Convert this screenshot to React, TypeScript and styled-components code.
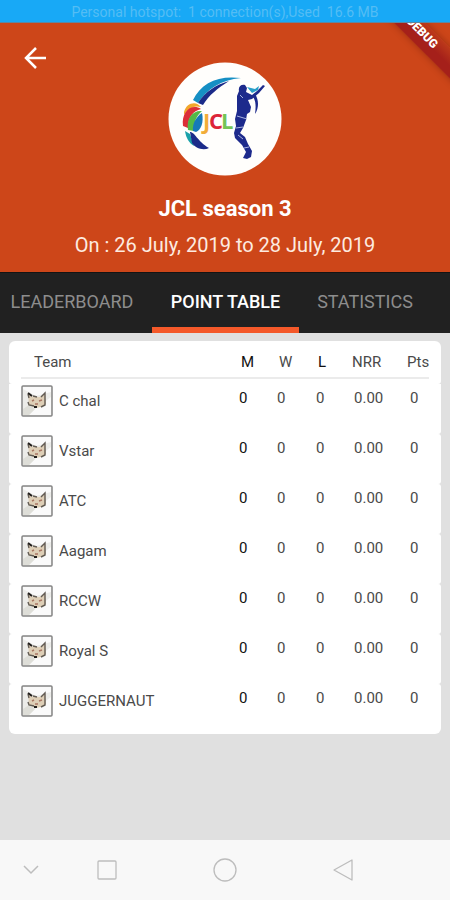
import React from 'react';
import styled, { createGlobalStyle } from 'styled-components';

const GlobalStyle = createGlobalStyle`
  * { box-sizing: border-box; }
  body { margin: 0; background: #e0e0e0; font-family: Roboto, "Liberation Sans", sans-serif; }
  button { border: 0; padding: 0; background: none; font: inherit; color: inherit; cursor: pointer; }
  svg { display: block; }
`;

const Screen = styled.div`
  min-height: 100vh;
  display: flex;
  flex-direction: column;
`;

const StatusBar = styled.div`
  height: 23px;
  line-height: 25px;
  background: #18a9f6;
  border-bottom: 1px solid #5d87a0;
  color: #54bdf4;
  font-size: 14px;
  text-align: center;
  white-space: pre;
`;

const Header = styled.header`
  position: relative;
  overflow: hidden;
  background: #cd4619;
  color: #fff;
  display: flex;
  flex-direction: column;
  align-items: center;
  padding: 39px 16px 14px;
`;

const BackButton = styled.button`
  position: absolute;
  left: 22px;
  top: 21px;
`;

const Ribbon = styled.div`
  position: absolute;
  right: -31px;
  top: 0;
  width: 120px;
  height: 22px;
  line-height: 18px;
  transform: rotate(45deg);
  background: linear-gradient(#bd3a1a, #a5201a 60%);
  box-shadow: 0 0 7px rgba(80, 10, 0, 0.4);
  font-size: 12px;
  font-weight: 900;
  text-align: center;
`;

const Title = styled.h1`
  margin: 18px 0 0;
  font-size: 22px;
  line-height: 30px;
  font-weight: 700;
`;

const Dates = styled.p`
  margin: 8px 0 0;
  font-size: 20px;
  line-height: 26px;
  color: #fdebe0;
`;

const Tabs = styled.nav`
  display: grid;
  grid-template-columns: 152fr 147fr 151fr;
  background: #212121;
  border-top: 1px solid #141414;
  height: 61px;
`;

const Tab = styled.button<{ $active?: boolean; $end?: number }>`
  font-size: 18px;
  line-height: 50px;
  padding: 4px ${p => p.$end ?? 0}px 0 0;
  white-space: nowrap;
  color: ${p => (p.$active ? '#fff' : '#8d8d8d')};
  font-weight: ${p => (p.$active ? 500 : 400)};
  border-bottom: 6px solid ${p => (p.$active ? '#f4592a' : 'transparent')};
`;

const Main = styled.main`
  flex: 1;
  padding: 8px 9px;
`;

const Table = styled.table`
  width: 100%;
  table-layout: fixed;
  border-spacing: 0;
  color: #4a4a4a;
  font-size: 15px;
`;

const Col = styled.col<{ $w: number }>`
  width: ${p => p.$w}px;
`;

const HeadCell = styled.th<{ $dark?: boolean }>`
  height: 43px;
  padding: 0 0 0 2px;
  background: linear-gradient(#ebebeb, #ebebeb) 0 36px / 100% 2px no-repeat #fff;
  text-align: left;
  vertical-align: top;
  line-height: 43px;
  font-weight: 400;
  color: ${p => (p.$dark ? '#111' : '#4a4a4a')};
  &:first-child {
    padding-left: 25px;
    border-radius: 6px 0 0 3px;
    background-position: 12px 36px;
  }
  &:last-child {
    padding-left: 0;
    border-radius: 0 6px 3px 0;
    background-position: -12px 36px;
  }
`;

const Row = styled.tr`
  td { height: 50px; background: #fff; }
  td:first-child { border-radius: 3px 0 0 3px; }
  td:last-child { border-radius: 0 3px 3px 0; }
  &:first-child td:first-child { border-top-left-radius: 0; }
  &:first-child td:last-child { border-top-right-radius: 0; }
  &:last-child td:first-child { border-bottom-left-radius: 6px; }
  &:last-child td:last-child { border-bottom-right-radius: 6px; }
`;

const TeamCell = styled.td`
  padding: 0 0 16px 12px;
`;

const Team = styled.div`
  display: flex;
  align-items: center;
  gap: 6px;
`;

const ValueCell = styled.td<{ $inset?: number; $dark?: boolean }>`
  padding: 4px 0 0 ${p => p.$inset ?? 0}px;
  vertical-align: top;
  line-height: 20px;
  color: ${p => (p.$dark ? '#111' : '#4a4a4a')};
`;

const BottomBar = styled.footer`
  height: 60px;
  background: #f8f8f8;
  display: grid;
  grid-template-columns: 62px 90px 1fr 90px 62px;
  align-items: center;
  justify-items: center;
`;

const LogoLetter = styled.text`
  font: 700 22px "Open Sans", "DejaVu Sans Condensed", sans-serif;
`;

const Logo = () => (
  <svg width="114" height="114" viewBox="0 0 114 114" role="img" aria-label="JCL">
    <circle cx="57" cy="57" r="56.5" fill="#fffefc" />
    <path d="M25 38C33 21 50 13 73 16C53 18 39 27 30 41Z" fill="#168fc4" />
    <path d="M30 41C37 30 47 23 61 19C50 26 41 33 35 43Z" fill="#1b2b89" />
    <path d="M16 50C18 41 28 38 33 45C25 43 20 47 16 53Z" fill="#f2a72c" />
    <path d="M15 64C13 49 24 41 33 47C25 49 20 55 20 66Z" fill="#dc2e38" />
    <path d="M20 68C18 56 25 48 34 49C28 54 26 60 26 69Z" fill="#54b947" />
    <path d="M25 69C24 61 29 54 34 51C36 60 33 68 28 70Z" fill="#1679b9" />
    <path d="M17 69C18 76 21 81 26 84L22 72Z" fill="#1ba2aa" />
    <path d="M22 70C27 70 29 79 41 86C35 89 27 86 24 81Z" fill="#1b2b89" />
    <LogoLetter x="35" y="67" fill="#f2ad38">J</LogoLetter>
    <LogoLetter x="41" y="67" fill="#dc2538">C</LogoLetter>
    <LogoLetter x="53" y="67" fill="#74c455">L</LogoLetter>
    <g fill="#1d2a8c">
      <path d="M71 29C70 25 73 22 77 23L79 26L78 30L84 33L89 29L95 23L97 24L91 31L84 37L80 38L83 45L82 50L79 52L78 58L75 66L72 71L77 75L80 82L84 89L83 95L79 97L75 96L78 90L74 83L67 76L66 71L68 64L67 57L69 49L69 34Z" />
      <path d="M87 32C91 38 91 46 87 52C88 45 88 39 85 35Z" />
    </g>
    <path d="M79 25L87 27L91 24L90 28L84 31Z" fill="#299fc9" />
    <path d="M69 54L79 57M68 66L75 65M70 73L75 77M76 86L81 85M72 33L75 36" stroke="#a9b3df" strokeWidth="1" />
  </svg>
);

const Fox = () => (
  <svg width="32" height="32" viewBox="0 0 32 32" aria-hidden="true">
    <rect x="1" y="1" width="30" height="30" rx="1" fill="#ecece9" />
    <path d="M2 4L15 11L30 7V2H2Z" fill="#fafafa" />
    <path d="M14 24L30 12V30H8Z" fill="#fafafa" />
    <path d="M2 24L8 20L14 24L8 30H2Z" fill="#deded8" />
    <path d="M7 8L12 12H19L24 8L25 19L20 22L15 23L8 20Z" fill="#decfb7" />
    <path d="M7 9L8 13M7 17L8 20L13 21M20 12L24 8V20L20 22M12 11L16 12" fill="none" stroke="#625b53" strokeWidth="1.4" />
    <path d="M7 8L11 11M13 22H16" stroke="#201d1b" strokeWidth="2" />
    <path d="M11 16L13 15M18 16L21 15M14 19H17" stroke="#a97764" strokeWidth="1.4" />
    <rect x="1" y="1" width="30" height="30" rx="1" fill="none" stroke="#858585" strokeWidth="1.5" />
  </svg>
);

const teams = ['C chal', 'Vstar', 'ATC', 'Aagam', 'RCCW', 'Royal S', 'JUGGERNAUT'];

export default function App() {
  return (
    <Screen>
      <GlobalStyle />
      <StatusBar>Personal hotspot:  1 connection(s),Used  16.6 MB</StatusBar>
      <Header>
        <BackButton aria-label="Back">
          <svg width="28" height="28" viewBox="0 0 28 28" fill="none" stroke="#fff" strokeWidth="2.5">
            <path d="M24 14H5M14 4L4 14L14 24" />
          </svg>
        </BackButton>
        <Ribbon>DEBUG</Ribbon>
        <Logo />
        <Title>JCL season 3</Title>
        <Dates>On : 26 July, 2019 to 28 July, 2019</Dates>
      </Header>
      <Tabs>
        <Tab $end={8}>LEADERBOARD</Tab>
        <Tab $active aria-current="page">POINT TABLE</Tab>
        <Tab $end={19}>STATISTICS</Tab>
      </Tabs>
      <Main>
        <Table>
          <colgroup>
            <col />
            <Col $w={38} />
            <Col $w={39} />
            <Col $w={34} />
            <Col $w={57} />
            <Col $w={34} />
          </colgroup>
          <thead>
            <tr>
              <HeadCell>Team</HeadCell>
              <HeadCell $dark>M</HeadCell>
              <HeadCell>W</HeadCell>
              <HeadCell $dark>L</HeadCell>
              <HeadCell>NRR</HeadCell>
              <HeadCell>Pts</HeadCell>
            </tr>
          </thead>
          <tbody>
            {teams.map(name => (
              <Row key={name}>
                <TeamCell><Team><Fox />{name}</Team></TeamCell>
                <ValueCell $dark>0</ValueCell>
                <ValueCell>0</ValueCell>
                <ValueCell>0</ValueCell>
                <ValueCell $inset={4}>0.00</ValueCell>
                <ValueCell $inset={3}>0</ValueCell>
              </Row>
            ))}
          </tbody>
        </Table>
      </Main>
      <BottomBar>
        <button aria-label="Hide bar">
          <svg width="16" height="10" viewBox="0 0 16 10" fill="none" stroke="#bdbdbd" strokeWidth="1.5"><path d="M1 1L8 8L15 1" /></svg>
        </button>
        <button aria-label="Recent apps">
          <svg width="20" height="20" viewBox="0 0 20 20" fill="none" stroke="#bdbdbd" strokeWidth="1.3"><rect x="1" y="1" width="18" height="18" rx="1" /></svg>
        </button>
        <button aria-label="Home">
          <svg width="24" height="24" viewBox="0 0 24 24" fill="none" stroke="#bdbdbd" strokeWidth="1.3"><circle cx="12" cy="12" r="11" /></svg>
        </button>
        <button aria-label="Back">
          <svg width="20" height="22" viewBox="0 0 20 22" fill="none" stroke="#bdbdbd" strokeWidth="1.3" strokeLinejoin="round"><path d="M1 11L19 1V21Z" /></svg>
        </button>
      </BottomBar>
    </Screen>
  );
}
